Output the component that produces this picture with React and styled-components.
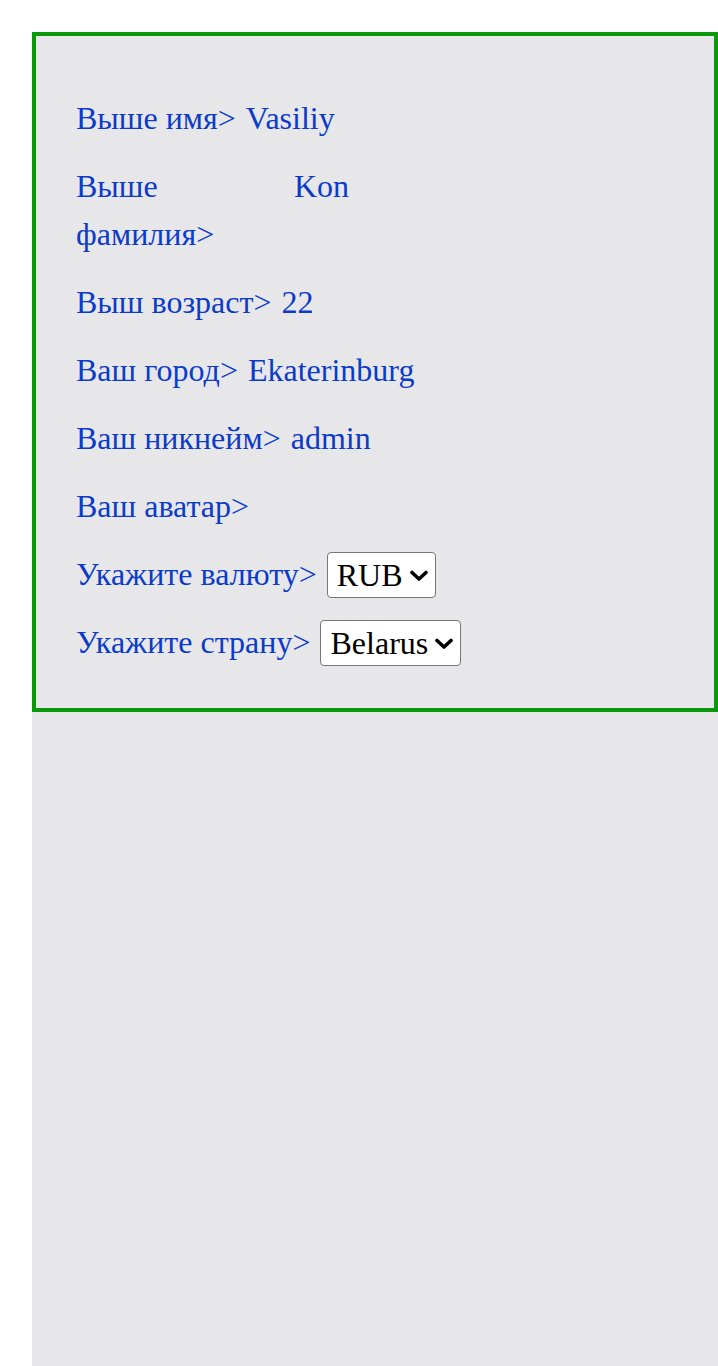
import React from "react";
import styled, { createGlobalStyle } from "styled-components";

const Global = createGlobalStyle`
  html, body { margin: 0; padding: 0; background: #ffffff; }
  body { font-family: "Liberation Serif", "Times New Roman", serif; }
`;

const Column = styled.div`
  margin: 32px 0 0 32px;
  min-height: calc(100vh - 32px);
  background: #e7e7ea;
`;

const Panel = styled.form`
  border: 4px solid #0b980b;
  padding: 58px 40px 42px 40px;
`;

const Row = styled.div`
  display: flex;
  align-items: flex-start;
  gap: 10px;
  margin-top: 20px;
  font-size: 32px;
  line-height: 48px;
  color: #0b3bc8;
  &:first-child { margin-top: 0; }
`;

const Label = styled.span`
  flex: 0 1 auto;
  max-width: ${(p) => p.$maxWidth || "none"};
`;

const Value = styled.span`
  flex: 0 0 auto;
`;

const SelectWrap = styled.span`
  position: relative;
  display: inline-flex;
  flex: 0 0 auto;
  margin-top: 2px;
`;

const Select = styled.select`
  appearance: none;
  -webkit-appearance: none;
  font-family: "Liberation Serif", "Times New Roman", serif;
  font-size: 32px;
  color: #000;
  background: #fff;
  border: 1px solid #767676;
  border-radius: 4px;
  height: 46px;
  margin: 0;
  padding: 0 32px 0 9px;
`;

const Chevron = styled.svg`
  position: absolute;
  right: 7px;
  top: 50%;
  width: 20px;
  height: 12px;
  margin-top: -5px;
  pointer-events: none;
`;

function Dropdown({ value, options }) {
  return (
    <SelectWrap>
      <Select defaultValue={value}>
        {options.map((o) => (
          <option key={o}>{o}</option>
        ))}
      </Select>
      <Chevron viewBox="0 0 20 12" aria-hidden="true">
        <path
          d="M3 2.5 L10 9 L17 2.5"
          fill="none"
          stroke="#000"
          strokeWidth="3.6"
          strokeLinecap="round"
          strokeLinejoin="round"
        />
      </Chevron>
    </SelectWrap>
  );
}

export default function App() {
  return (
    <>
      <Global />
      <Column>
        <Panel onSubmit={(e) => e.preventDefault()}>
          <Row>
            <Label>Выше имя&gt;</Label>
            <Value>Vasiliy</Value>
          </Row>
          <Row>
            <Label $maxWidth="208px">Выше фамилия&gt;</Label>
            <Value>Kon</Value>
          </Row>
          <Row>
            <Label>Выш возраст&gt;</Label>
            <Value>22</Value>
          </Row>
          <Row>
            <Label>Ваш город&gt;</Label>
            <Value>Ekaterinburg</Value>
          </Row>
          <Row>
            <Label>Ваш никнейм&gt;</Label>
            <Value>admin</Value>
          </Row>
          <Row>
            <Label>Ваш аватар&gt;</Label>
          </Row>
          <Row>
            <Label>Укажите валюту&gt;</Label>
            <Dropdown value="RUB" options={["RUB", "USD", "EUR"]} />
          </Row>
          <Row>
            <Label>Укажите страну&gt;</Label>
            <Dropdown value="Belarus" options={["Belarus", "Russia"]} />
          </Row>
        </Panel>
      </Column>
    </>
  );
}
